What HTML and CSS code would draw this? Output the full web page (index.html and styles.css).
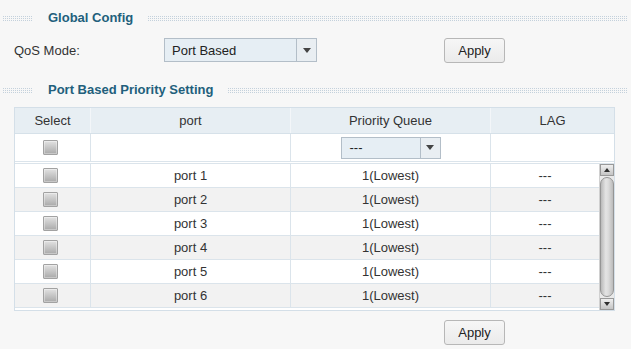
FILE: index.html
```html
<!DOCTYPE html>
<html>
<head>
<meta charset="utf-8">
<link rel="stylesheet" href="styles.css">
</head>
<body>
<div class="page">
  <div class="sec-title">
    <span class="dots short"></span>
    <h2>Global Config</h2>
    <span class="dots"></span>
  </div>
  <div class="form-row">
    <span class="label">QoS Mode:</span>
    <div class="select wide"><span class="val">Port Based</span><span class="arrow"><i></i></span></div>
    <button class="btn">Apply</button>
  </div>
  <div class="sec-title second">
    <span class="dots short"></span>
    <h2>Port Based Priority Setting</h2>
    <span class="dots"></span>
  </div>
  <div class="grid">
    <div class="row head">
      <div class="cell">Select</div>
      <div class="cell">port</div>
      <div class="cell">Priority Queue</div>
      <div class="cell">LAG</div>
    </div>
    <div class="row filter">
      <div class="cell sel"><span class="cb"></span></div>
      <div class="cell"></div>
      <div class="cell"><div class="select narrow"><span class="val">---</span><span class="arrow"><i></i></span></div></div>
      <div class="cell"></div>
    </div>
    <div class="body">
      <div class="rows">
        <div class="row"><div class="cell sel"><span class="cb"></span></div><div class="cell">port 1</div><div class="cell">1(Lowest)</div><div class="cell">---</div></div>
        <div class="row alt"><div class="cell sel"><span class="cb"></span></div><div class="cell">port 2</div><div class="cell">1(Lowest)</div><div class="cell">---</div></div>
        <div class="row"><div class="cell sel"><span class="cb"></span></div><div class="cell">port 3</div><div class="cell">1(Lowest)</div><div class="cell">---</div></div>
        <div class="row alt"><div class="cell sel"><span class="cb"></span></div><div class="cell">port 4</div><div class="cell">1(Lowest)</div><div class="cell">---</div></div>
        <div class="row"><div class="cell sel"><span class="cb"></span></div><div class="cell">port 5</div><div class="cell">1(Lowest)</div><div class="cell">---</div></div>
        <div class="row alt"><div class="cell sel"><span class="cb"></span></div><div class="cell">port 6</div><div class="cell">1(Lowest)</div><div class="cell">---</div></div>
      </div>
      <div class="scrollbar">
        <span class="sb-btn up"><i></i></span>
        <span class="sb-track"><span class="sb-thumb"></span></span>
        <span class="sb-btn down"><i></i></span>
      </div>
    </div>
  </div>
  <div class="footer">
    <button class="btn">Apply</button>
  </div>
</div>
</body>
</html>
```
FILE: styles.css
```css
html, body {
  margin: 0;
  padding: 0;
  background: #f7f7f7;
}
body {
  font-family: "Liberation Sans", Arial, sans-serif;
  font-size: 13px;
  color: #333;
}
.page {
  width: 631px;
  padding: 8px 4px 0 3px;
  box-sizing: border-box;
}
.sec-title {
  display: flex;
  align-items: center;
  height: 20px;
  gap: 16px;
}
.sec-title.second {
  margin-top: 18px;
}
.sec-title h2 {
  margin: 0 -1px 0 -1px;
  font-size: 13px;
  font-weight: bold;
  color: #225f7c;
  line-height: 20px;
  white-space: nowrap;
}
.dots {
  flex: 1;
  height: 7px;
  background-image:
    repeating-linear-gradient(0deg, #f7f7f7 0 1px, transparent 1px 2px),
    repeating-linear-gradient(90deg, #c4d1dc 0 1px, transparent 1px 2px);
}
.dots.short {
  flex: 0 0 30px;
}
.form-row {
  display: flex;
  align-items: center;
  height: 24px;
  margin-top: 10px;
  padding-left: 11px;
}
.label {
  width: 150px;
}
.select {
  display: flex;
  align-items: stretch;
  box-sizing: border-box;
  border: 1px solid #b3bec8;
  background: #e6eef4;
  color: #222;
}
.select .val {
  flex: 1;
  display: flex;
  align-items: center;
  padding-left: 7px;
}
.select .arrow {
  width: 19px;
  border-left: 1px solid #b3bec8;
  display: flex;
  align-items: center;
  justify-content: center;
  background: #e9eef2;
}
.select .arrow i {
  width: 0;
  height: 0;
  border-left: 4px solid transparent;
  border-right: 4px solid transparent;
  border-top: 5px solid #444;
}
.select.wide {
  width: 153px;
  height: 24px;
}
.select.narrow {
  width: 100px;
  height: 22px;
}
.select.narrow .val {
  padding-left: 8px;
}
.btn {
  font-family: "Liberation Sans", Arial, sans-serif;
  font-size: 13px;
  color: #222;
  width: 61px;
  height: 25px;
  padding: 0;
  border: 1px solid #b7b7b7;
  border-radius: 3px;
  background: linear-gradient(#f6f6f6, #ebebeb);
}
.form-row .btn {
  margin-left: 127px;
}
.grid {
  margin-top: 7px;
  margin-left: 11px;
  width: 601px;
  box-sizing: border-box;
  border: 1px solid #d4dfe8;
  background: #fff;
}
.row {
  display: grid;
  grid-template-columns: 76px 200px 200px 1fr;
  height: 24px;
  box-sizing: border-box;
  border-bottom: 1px solid #dbe4eb;
  background: #fff;
}
.row.alt {
  background: #f2f2f2;
}
.cell {
  display: flex;
  align-items: center;
  justify-content: center;
  border-right: 1px solid #dbe4eb;
  box-sizing: border-box;
  white-space: nowrap;
}
.cell:last-child {
  border-right: none;
}
.cell.sel {
  padding-right: 4px;
}
.row.head {
  height: 26px;
  background: #e7eef3;
  border-bottom-color: #d6e1e9;
}
.row.head .cell {
  border-right-color: #f3f6f9;
}
.row.filter {
  height: 28px;
}
.cb {
  width: 15px;
  height: 15px;
  box-sizing: border-box;
  border: 1px solid #a2a2a2;
  border-radius: 1px;
  background: linear-gradient(#e2e2e2, #a9a9a9);
  box-shadow: inset 0 0 0 1px rgba(255, 255, 255, 0.35);
}
.body {
  display: flex;
  margin-top: 1px;
  border-top: 1px solid #dbe4eb;
  height: 146px;
}
.rows {
  flex: 1;
  overflow: hidden;
}
.scrollbar {
  width: 15px;
  display: flex;
  flex-direction: column;
  background: #e9e9e9;
  box-sizing: border-box;
  border-left: 1px solid #d0d0d0;
}
.sb-btn {
  height: 12px;
  box-sizing: border-box;
  border: 1px solid #999;
  background: linear-gradient(#efefef, #c4c4c4);
  display: flex;
  align-items: center;
  justify-content: center;
}
.sb-btn i {
  width: 0;
  height: 0;
  border-left: 3px solid transparent;
  border-right: 3px solid transparent;
}
.sb-btn.up i {
  border-bottom: 4px solid #2e2e2e;
}
.sb-btn.down i {
  border-top: 4px solid #2e2e2e;
}
.sb-track {
  flex: 1;
  display: flex;
  padding: 1px 0;
}
.sb-thumb {
  flex: 1;
  border: 1px solid #959595;
  border-radius: 7px;
  background: linear-gradient(90deg, #b9b9b9, #e4e4e4 40%, #dcdcdc 60%, #bcbcbc);
}
.footer {
  margin-top: 9px;
  padding-left: 441px;
}
```
